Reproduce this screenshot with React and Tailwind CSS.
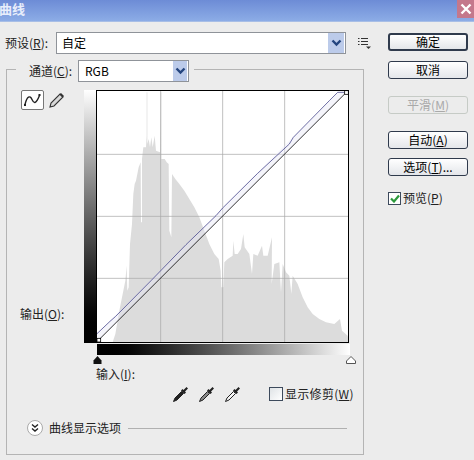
import React from "react";

const F = { fontFamily: '"Noto Sans CJK SC","Liberation Sans",sans-serif' };

const HIST = "70,775 78,750 90,680 100,630 108,590 112,545 114,620 118,610 122,480 128,420 132,330 136,300 140,290 148,250 154,235 155,415 158,415 158,225 162,190 170,190 172,155 172,25 174,25 174,180 178,165 182,190 186,160 190,190 196,155 200,200 212,205 214,25 216,25 216,225 226,225 232,235 238,240 240,440 246,460 248,270 258,285 270,300 285,320 300,345 315,370 330,400 345,440 360,480 375,510 388,525 394,560 396,610 402,610 405,535 415,525 430,515 432,470 436,510 445,510 455,495 462,450 466,490 480,510 488,570 492,510 505,515 518,485 522,515 535,515 548,460 547,600 555,540 570,535 575,625 580,540 590,565 600,575 606,630 610,575 625,600 640,640 655,670 670,690 690,705 710,715 735,720 752,705 758,740 775,755 778,775";

function Graph() {
  return (
    <svg width="253" height="253" viewBox="20 18 759 759" className="block">
      <rect x="20" y="18" width="759" height="759" fill="#fff" />
      <polygon points={HIST} fill="#dcdcdc" />
      <g stroke="#a9a9a9" strokeWidth="2.2">
        <path d="M214 18V775M400 18V775M586 18V775M20 211H778M20 397H778M20 583H778" />
      </g>
      <polygon points="22,750 745,25 771,25 28,768" fill="#e6e6f6" opacity="0.4" />
      <path d="M22 750L62 712 78 698 185 590 290 482 380 395 400 372 505 268 600 180 612 160 720 50 745 25H771" fill="none" stroke="#2a2a78" strokeWidth="2" />
      <path d="M28 768L771 25" fill="none" stroke="#000" strokeWidth="2.4" />
      <rect x="23" y="763" width="11" height="11" fill="#fff" stroke="#000" strokeWidth="2.4" />
      <rect x="766" y="20" width="11" height="11" fill="#fff" stroke="#000" strokeWidth="2.4" />
      <rect x="21" y="19" width="757" height="757" fill="none" stroke="#000" strokeWidth="4" />
    </svg>
  );
}

function Arrow({ w = 16, h = 20 }) {
  return (
    <span className="flex shrink-0 items-center justify-center bg-[#bccbea]" style={{ width: w, height: h }}>
      <svg width="11" height="8" viewBox="0 0 11 8">
        <path d="M1.5 1.5L5.5 5.5L9.5 1.5" fill="none" stroke="#24457f" strokeWidth="2.4" />
      </svg>
    </span>
  );
}

function Btn({ children, cls = "", disabled }) {
  return (
    <button
      className={`flex h-[18px] w-[80px] items-center justify-center rounded-[3px] border bg-gradient-to-b from-white to-[#e4e6ea] text-[12px] leading-none ${
        disabled ? "border-[#c6cbc6] bg-none bg-[#ececec] text-[#a9a9a9]" : "border-[#2f3a4c] text-black"
      } ${cls}`}
    >
      {children}
    </button>
  );
}

function Dropper({ tone }) {
  return (
    <svg width="18" height="18" viewBox="0 0 18 18">
      <path d="M1.5 16.5L3 13L9.5 6.5L11.5 8.5L5 15Z" fill={tone} stroke="#222" strokeWidth="1" />
      <path d="M9 5.5L12.5 9L14 7.5L13 6.5L16 3.5L14.5 2L11.5 5L10.5 4Z" fill="#222" />
    </svg>
  );
}

export default function App() {
  return (
    <div className="flex h-[460px] w-[474px] flex-col overflow-hidden bg-[#ececec] text-[#222]" style={F}>
      <div className="flex h-[22px] shrink-0 items-start justify-between border-b border-[#a8bee6] bg-gradient-to-b from-[#6d8cd6] to-[#8cace6]">
        <span className="-ml-[1px] text-[13px] font-bold leading-[18px] text-[#e8eefb]">曲线</span>
        <span className="flex h-[18px] w-[17px] items-center justify-center bg-[#c4788c]">
          <svg width="12" height="12" viewBox="0 0 12 12">
            <path d="M1.5 1.5L10.5 10.5M10.5 1.5L1.5 10.5" stroke="#fff" strokeWidth="2.4" />
          </svg>
        </span>
      </div>

      <div className="flex flex-1 pl-[5px] pr-[6px] pt-[10px]">
        <div className="flex w-[359px] shrink-0 flex-col">
          <div className="flex h-[22px] items-center">
            <span className="w-[51px] shrink-0 whitespace-nowrap text-[12px]">预设(<u>R</u>):</span>
            <div className="flex h-[22px] w-[290px] shrink-0 items-center justify-between border border-[#8f9399] bg-white pl-[5px] pr-[1px] text-[12px] text-black">
              <span>自定</span>
              <Arrow />
            </div>
            <svg width="14" height="12" viewBox="0 0 14 12" className="ml-[11px] shrink-0">
              <path d="M1 1.5H2.5M1 4.5H2.5M1 7.5H2.5M4 1.5H11M4 4.5H11M4 7.5H11" stroke="#333" strokeWidth="1.2" />
              <path d="M9 9.5H14L11.5 12Z" fill="#333" />
            </svg>
          </div>

          <fieldset className="ml-[1px] mt-[6px] h-[395px] w-[358px] border border-[#b4b4b4] p-0">
            <legend className="ml-[9px] h-[18px] w-[178px] pl-[13px]">
              <div className="flex h-[22px] items-center">
                <span className="w-[49px] shrink-0 whitespace-nowrap text-[12px]">通道(<u>C</u>):</span>
                <div className="flex h-[22px] w-[111px] items-center justify-between border border-[#8f9399] bg-white pl-[6px] pr-[1px] text-[12px] text-black">
                  <span>RGB</span>
                  <Arrow w={14} />
                </div>
              </div>
            </legend>

            <div className="mt-[12px] flex">
              <div className="flex h-[253px] w-[77px] shrink-0 flex-col justify-between">
                <div className="flex items-center pl-[14px]">
                  <span className="flex h-[20px] w-[23px] items-center justify-center rounded-[2px] border border-[#777] bg-white">
                    <svg width="19" height="14" viewBox="0 0 19 14">
                      <path d="M2 11.5C4 3 7 2 9 6.5S13 11 16.5 2.5" fill="none" stroke="#222" strokeWidth="1.4" />
                      <rect x="1" y="11" width="2" height="2" fill="#222" />
                      <rect x="15.5" y="1" width="2" height="2" fill="#222" />
                    </svg>
                  </span>
                  <svg width="17" height="18" viewBox="0 0 17 18" className="ml-[4px]">
                    <path d="M2 16L3 12L12 3L15 6L6 15Z" fill="#d8d8d8" stroke="#333" strokeWidth="1.1" />
                    <path d="M11.5 3.5L13 2L16 5L14.5 6.5Z" fill="#333" />
                  </svg>
                </div>
                <span className="mb-[21px] pl-[13px] text-[12px] leading-[16px]">输出(<u>O</u>):</span>
              </div>
              <div className="h-[253px] w-[12px] shrink-0 bg-gradient-to-b from-white to-black" />
              <Graph />
            </div>

            <div className="ml-[90px] mt-[1px] h-[11px] w-[253px] bg-gradient-to-r from-black to-white" />
            <div className="ml-[86px] mt-[1px] flex w-[263px] justify-between">
              <svg width="9" height="8" viewBox="0 0 9 8">
                <path d="M4.5 0L8.5 4.5V8H.5V4.5Z" fill="#111" />
              </svg>
              <svg width="10" height="8" viewBox="0 0 10 8">
                <path d="M5 .5L9.5 5V7.5H.5V5Z" fill="#fff" stroke="#555" />
              </svg>
            </div>
            <div className="ml-[89px] mt-[2px] text-[12px] leading-[16px]">输入(<u>I</u>):</div>
            <div className="mt-[2px] flex h-[19px] items-center pl-[165px]">
              <Dropper tone="#222" />
              <span className="w-[8px]" />
              <Dropper tone="#888" />
              <span className="w-[8px]" />
              <Dropper tone="#f4f4f4" />
              <span className="ml-[27px] h-[14px] w-[14px] border border-[#3d4a5c] bg-gradient-to-br from-[#dfe3e6] to-white" />
              <span className="ml-[2px] whitespace-nowrap text-[12px] tracking-[0.3px]">显示修剪(<u>W</u>)</span>
            </div>
            <div className="mt-[16px] flex h-[18px] items-center pl-[20px]">
              <span className="flex h-[16px] w-[16px] items-center justify-center rounded-full border border-[#aaa] bg-white">
                <svg width="10" height="10" viewBox="0 0 10 10">
                  <path d="M2 1.5L5 4L8 1.5M2 5.5L5 8L8 5.5" fill="none" stroke="#222" strokeWidth="1.4" />
                </svg>
              </span>
              <span className="ml-[6px] whitespace-nowrap text-[12px]">曲线显示选项</span>
              <span className="ml-[7px] h-[1px] w-[219px] bg-[#b0b0b0]" />
            </div>
          </fieldset>
        </div>

        <div className="ml-[24px] mt-[1px] flex w-[80px] flex-col">
          <Btn cls="border-[#2a4f94] border-2">确定</Btn>
          <Btn cls="mt-[10px]">取消</Btn>
          <Btn cls="mt-[17px]" disabled>平滑(<u>M</u>)</Btn>
          <Btn cls="mt-[17px]">自动(<u>A</u>)</Btn>
          <Btn cls="mt-[9px]">选项(<u>T</u>)...</Btn>
          <label className="mt-[14px] flex items-center text-[12px] leading-[16px]">
            <span className="flex h-[13px] w-[13px] items-center justify-center border border-[#3d4a5c] bg-white">
              <svg width="10" height="9" viewBox="0 0 10 9">
                <path d="M1 4.5L4 7.5L9 1.5" fill="none" stroke="#2c9a3c" strokeWidth="2.2" />
              </svg>
            </span>
            <span className="ml-[2px] whitespace-nowrap">预览(<u>P</u>)</span>
          </label>
        </div>
      </div>
    </div>
  );
}
